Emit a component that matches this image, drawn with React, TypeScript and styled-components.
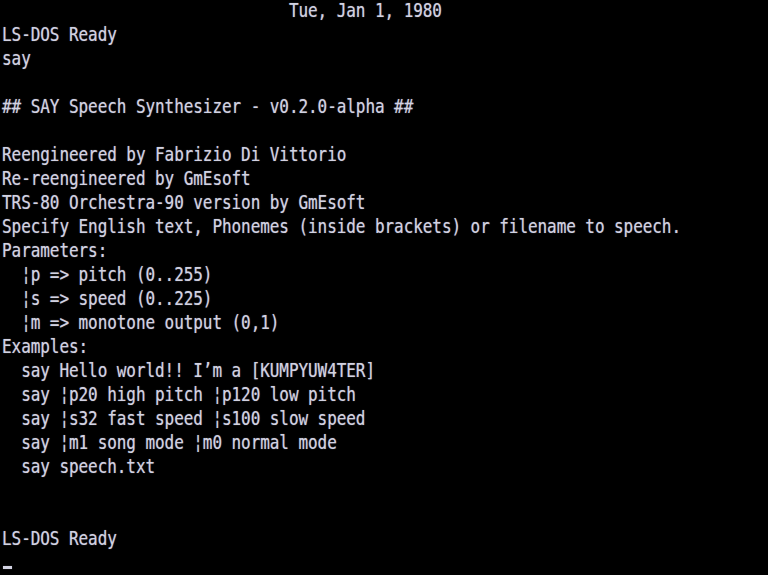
import React from "react";
import styled, { createGlobalStyle } from "styled-components";

const Global = createGlobalStyle`
  html, body {
    margin: 0;
    padding: 0;
    background: #000;
    overflow: hidden;
  }
`;

const Screen = styled.div`
  width: 768px;
  height: 575px;
  background: #000;
  display: grid;
  grid-template-rows: repeat(24, 1fr);
  padding-left: 2px;
  box-sizing: border-box;
  font-family: "DejaVu Sans Mono", "Liberation Mono", monospace;
  font-size: 16px;
  letter-spacing: -0.07px;
  color: #d2d2e2;
  text-shadow: 0 0 1px rgba(210, 210, 226, 0.55);
  overflow: hidden;
`;

const Line = styled.div`
  white-space: pre;
  line-height: 24px;
  height: 24px;
  transform: scaleY(1.2);
  transform-origin: 0 16px;
`;

const CursorRow = styled.div`
  display: flex;
  align-items: flex-end;
  padding-bottom: 6px;
  padding-left: 1px;
`;

const Cursor = styled.span`
  display: block;
  width: 9px;
  height: 3px;
  background: #d2d2e2;
  box-shadow: 0 0 1px rgba(210, 210, 226, 0.6);
`;

const lines: string[] = [
  " ".repeat(30) + "Tue, Jan 1, 1980",
  "LS-DOS Ready",
  "say",
  "",
  "## SAY Speech Synthesizer - v0.2.0-alpha ##",
  "",
  "Reengineered by Fabrizio Di Vittorio",
  "Re-reengineered by GmEsoft",
  "TRS-80 Orchestra-90 version by GmEsoft",
  "Specify English text, Phonemes (inside brackets) or filename to speech.",
  "Parameters:",
  "  ¦p => pitch (0..255)",
  "  ¦s => speed (0..225)",
  "  ¦m => monotone output (0,1)",
  "Examples:",
  "  say Hello world!! I’m a [KUMPYUW4TER]",
  "  say ¦p20 high pitch ¦p120 low pitch",
  "  say ¦s32 fast speed ¦s100 slow speed",
  "  say ¦m1 song mode ¦m0 normal mode",
  "  say speech.txt",
  "",
  "",
  "LS-DOS Ready",
];

export default function App() {
  return (
    <>
      <Global />
      <Screen>
        {lines.map((l, i) => (
          <Line key={i}>{l}</Line>
        ))}
        <CursorRow>
          <Cursor />
        </CursorRow>
      </Screen>
    </>
  );
}
